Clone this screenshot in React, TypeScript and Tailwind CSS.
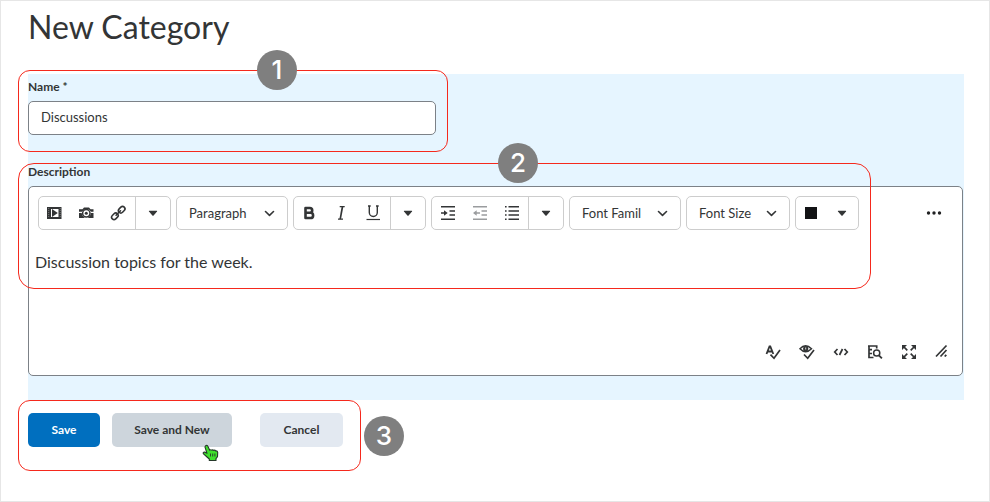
import type { ReactNode } from "react";

function Icon({ children, className = "" }: { children: ReactNode; className?: string }) {
  return (
    <svg width="18" height="18" viewBox="0 0 18 18" fill="none" stroke="currentColor" className={className} aria-hidden="true">
      {children}
    </svg>
  );
}

function Tool({ label, children, className = "" }: { label: string; children: ReactNode; className?: string }) {
  return (
    <button type="button" aria-label={label} className={`flex h-8 w-8 items-center justify-center ${className}`}>
      {children}
    </button>
  );
}

function MoreArrow({ label }: { label: string }) {
  return (
    <button type="button" aria-label={label} className="flex h-8 flex-1 items-center justify-center border-l border-[#cdcdcd]">
      <Caret />
    </button>
  );
}

function Caret() {
  return (
    <svg width="10" height="6" viewBox="0 0 10 6" fill="currentColor" aria-hidden="true">
      <path d="M1.3.7h7.4q.8.1.3.9L5.6 5.4q-.6.5-1.200 0L1 1.6Q.5.8 1.3.7Z" />
    </svg>
  );
}

const groupStyle = "flex h-[34px] shrink-0 items-center rounded-[5px] border border-[#cdcdcd] bg-white";

function ToolSelect({ label, value, className }: { label: string; value: string; className: string }) {
  return (
    <div className={`relative ${groupStyle} ${className}`}>
      <select aria-label={label} defaultValue={value} className="h-full w-full appearance-none bg-transparent pt-0.5 pl-3 text-[13px] outline-none">
        <option>{value}</option>
      </select>
      <svg className="pointer-events-none absolute inset-y-0 right-3 my-auto" width="12" height="10" viewBox="0 0 12 10" fill="none" stroke="currentColor" strokeWidth="1.6" strokeLinecap="round" strokeLinejoin="round" aria-hidden="true">
        <path d="M2.500 3.500 6.500 7.300l4-3.800" />
      </svg>
    </div>
  );
}

function Outline({ className }: { className: string }) {
  return <div className={`pointer-events-none absolute border border-[#f5291d] ${className}`} />;
}

function Badge({ n, className }: { n: number; className: string }) {
  return (
    <span className={`pointer-events-none absolute z-10 flex h-10 w-10 items-center justify-center rounded-full bg-[#7f7f7f] font-['Inter',sans-serif] text-[26px] leading-none font-medium text-white ${className}`}>
      {n}
    </span>
  );
}

function Toolbar() {
  return (
    <div className="flex items-center gap-[5px] pr-3 pl-[9px]">
      <div className={`${groupStyle} w-[133px]`}>
        <Tool label="Insert stuff">
          <Icon>
            <path fill="currentColor" stroke="none" fillRule="evenodd" d="M1 3h14.500v12H1ZM5 5v8h7.500V5Z" />
            <path fill="currentColor" stroke="none" d="M6 5 11.800 9 6 13Z" />
            <path stroke="#fff" strokeOpacity=".45" strokeWidth=".8" strokeDasharray="1 1" d="M2.700 4v10M14.200 4v10" />
          </Icon>
        </Tool>
        <Tool label="Insert image">
          <Icon>
            <path fill="currentColor" stroke="none" d="M1 5.200h3.500L6 3.500h5l1.500 1.700H15.500v2.600H13A5 5 0 0 0 4 7.800H1ZM1 8.900h2.700a5 5 0 0 0 2 4.200l1 .9H1ZM15.500 8.900h-2.700a5 5 0 0 1-2 4.200l-1 .9h5.700Z" />
            <circle cx="8.300" cy="9.300" r="3.700" strokeWidth="1.500" fill="#fff" />
            <circle cx="8.300" cy="9.300" r="1.500" fill="currentColor" stroke="none" />
          </Icon>
        </Tool>
        <Tool label="Insert quicklink">
          <Icon>
            <g strokeWidth="1.600" strokeLinecap="round" transform="translate(-.7)">
              <rect x="8.800" y="3.300" width="7.200" height="4.800" rx="2.400" transform="rotate(-45 12.400 5.700)" />
              <rect x="2" y="9.900" width="7.200" height="4.800" rx="2.400" transform="rotate(-45 5.600 12.300)" />
              <path d="m6.800 11.200 4.400-4.400" />
            </g>
          </Icon>
        </Tool>
        <MoreArrow label="More insert options" />
      </div>

      <ToolSelect label="Format" value="Paragraph" className="w-28" />

      <div className={`${groupStyle} w-[133px]`}>
        <Tool label="Bold">
          <Icon>
            <path strokeWidth="2.600" strokeLinejoin="round" d="M4.500 4h4.300a2.400 2.400 0 0 1 0 4.800H4.500ZM4.500 8.800h5a2.600 2.600 0 0 1 0 5.200h-5Z" />
          </Icon>
        </Tool>
        <Tool label="Italic">
          <Icon>
            <path strokeWidth="1.200" d="M6.700 2.600h5M5 15.200h5" />
            <path strokeWidth="1.700" d="M9.500 2.600 7.200 15.200" />
          </Icon>
        </Tool>
        <Tool label="Underline">
          <Icon>
            <path strokeWidth="1.400" d="M4.300 2v6.500a4 4 0 0 0 8 0V2M3 2h2.700M11 2h2.700" />
            <path strokeWidth="1.200" d="M1.500 15.500h13.500" />
          </Icon>
        </Tool>
        <MoreArrow label="More text styles" />
      </div>

      <div className={`${groupStyle} w-[133px]`}>
        <Tool label="Indent">
          <Icon>
            <path strokeWidth="1.500" d="M2 2.700h14M10.500 7h5.500M10.500 11h5.500M2 15.300h14M2 9h4" />
            <path fill="currentColor" stroke="none" d="M5 6.200 8.700 9 5 11.800Z" />
          </Icon>
        </Tool>
        <Tool label="Outdent" className="text-[#9a9c9e]">
          <Icon>
            <path strokeWidth="1.500" d="M2 2.700h14M10.500 7h5.500M10.500 11h5.500M2 15.300h14M5 9h4" />
            <path fill="currentColor" stroke="none" d="M5.700 6.200 2 9l3.700 2.800Z" />
          </Icon>
        </Tool>
        <Tool label="Bulleted list">
          <Icon>
            <path strokeWidth="1.500" d="M5.500 2.700H16M5.500 6.900H16M5.500 11.100H16M5.500 15.300H16M2 2.700h1.600M2 6.900h1.600M2 11.100h1.600M2 15.300h1.600" />
          </Icon>
        </Tool>
        <MoreArrow label="More list options" />
      </div>

      <ToolSelect label="Font family" value="Font Famil" className="w-28" />
      <ToolSelect label="Font size" value="Font Size" className="w-[104px]" />

      <button type="button" aria-label="Text color" className={`${groupStyle} w-16 justify-between pr-[11px] pl-[9px]`}>
        <span className="h-3 w-3 bg-[#121315]" />
        <Caret />
      </button>

      <button type="button" aria-label="More actions" className="ml-auto flex h-8 w-8 items-center justify-center">
        <svg width="16" height="4" viewBox="0 0 16 4" fill="#202122" aria-hidden="true">
          <circle cx="2.500" cy="2" r="1.700" />
          <circle cx="8" cy="2" r="1.700" />
          <circle cx="13.500" cy="2" r="1.700" />
        </svg>
      </button>
    </div>
  );
}

function StatusBar() {
  const cell = "w-[34px]";
  return (
    <div className="flex justify-end pr-1">
      <Tool label="Check spelling" className={cell}>
        <Icon>
          <path strokeWidth="1.800" d="M2.500 11 5.500 3.300h.8L9.300 11M3.500 8.500h5" />
          <path strokeWidth="1.700" d="m6.500 11.700 3.500 3.600L16 7" />
        </Icon>
      </Tool>
      <Tool label="Check accessibility" className={cell}>
        <Icon>
          <path strokeWidth="1.500" d="M2 5.800q5.500-6 11.500 0-6 6-11.500 0Z" />
          <circle cx="7.700" cy="5.700" r="2.600" fill="currentColor" stroke="none" />
          <path stroke="#fff" strokeWidth=".8" d="M7.700 4.500v2" />
          <path strokeWidth="1.700" d="m6 11.500 3.700 3.800L16 7" />
        </Icon>
      </Tool>
      <Tool label="Source code" className={cell}>
        <Icon>
          <path strokeWidth="1.700" d="M5.500 6 2.700 9l2.800 3M12.500 6l2.800 3-2.800 3M10.500 6l-3 6" />
        </Icon>
      </Tool>
      <Tool label="Preview" className={cell}>
        <Icon>
          <path strokeWidth="1.700" d="M7.500 14.500H3v-12M2 3h8.700v2.500M3 6.700h3M3 10.500h3" />
          <circle cx="10.700" cy="10" r="3.100" strokeWidth="1.500" />
          <path strokeWidth="1.800" d="m12.900 12.300 3 3" />
        </Icon>
      </Tool>
      <Tool label="Full screen" className={cell}>
        <Icon>
          <path strokeWidth="1.700" d="m3 3 4.300 4.300M15 3l-4.300 4.300M3 15l4.300-4.300M15 15l-4.300-4.300" />
          <path fill="currentColor" stroke="none" d="M2 2h5L2 7ZM16 2v5l-5-5ZM2 16v-5l5 5ZM16 16h-5l5-5Z" />
        </Icon>
      </Tool>
      <Tool label="Resize editor">
        <Icon>
          <path strokeWidth="1.700" d="M3 13.500 13.500 2.500M7.500 13.500l6-6.500" />
          <path strokeWidth="1.800" d="m11.700 13.500 1.600-1.700" />
        </Icon>
      </Tool>
    </div>
  );
}

function HandCursor() {
  return (
    <svg className="pointer-events-none absolute -bottom-[15px] left-[90px]" width="18" height="18" viewBox="0 0 18 18" aria-hidden="true">
      <path fill="#3fe02c" stroke="#26382a" strokeWidth="1.100" strokeLinejoin="round" d="M4 1.500Q5.500 1 6 2.500L7.700 6.200q1-.9 2 0 1-.8 2 .2 1.200-.6 2 .5 1.800-.2 2 1.500l-.2 4.200-1.500 2v1.900H7.300V15L5 13 1.300 9.700Q.9 8 2.600 8l2.400 1.300L3 3.200Q2.900 2 4 1.500Z" />
      <path fill="none" stroke="#26382a" strokeWidth=".9" d="M8.500 9.500v3M10.700 9.500v3M12.900 9.500v3" />
    </svg>
  );
}

const buttonStyle = "h-[34px] rounded-[5px] text-xs font-bold";

export default function App() {
  return (
    <main className="min-h-screen border border-[#e6e6e6] bg-white pr-[25px] pb-[54px] pl-[27px] font-['Lato',sans-serif] text-[#333536]">
      <h1 className="pt-1 text-[32px] leading-[44px]">New Category</h1>

      <form>
        <div className="mt-[25px] bg-[#e6f5ff] pb-6">
          <section className="relative pt-1">
            <label htmlFor="name" className="block text-xs leading-[18px] font-bold">
              Name *
            </label>
            <input
              id="name"
              defaultValue="Discussions"
              className="mt-[5px] block h-[34px] w-[408px] rounded-[5px] border border-[#7c8187] bg-white px-3 pb-0.5 text-[13px] outline-none"
            />
            <Outline className="-top-1 -bottom-[17px] -left-[10px] w-[430px] rounded-xl" />
            <Badge n={1} className="-top-6 left-[229px]" />
          </section>

          <section className="relative mt-7">
            <label htmlFor="description" className="block text-xs leading-[18px] font-bold">
              Description
            </label>
            <div className="mt-[5px] mr-px rounded-[5px] border border-[#7c8187] bg-white pt-[9px] pb-[7px]">
              <Toolbar />
              <textarea
                id="description"
                defaultValue="Discussion topics for the week."
                className="block h-[106px] w-full resize-none px-1.5 pt-5 text-base leading-6 outline-none"
              />
              <StatusBar />
            </div>
            <Outline className="top-0 -left-[10px] h-[126px] w-[853px] rounded-2xl" />
            <Badge n={2} className="-top-5 left-[470px]" />
          </section>
        </div>

        <footer className="relative flex pt-[13px]">
          <button type="submit" className={`${buttonStyle} w-[72px] bg-[#006fbf] text-white`}>
            Save
          </button>
          <div className="relative ml-3">
            <button type="button" className={`${buttonStyle} w-[120px] bg-[#cdd5dc]`}>
              Save and New
            </button>
            <HandCursor />
          </div>
          <button type="button" className={`${buttonStyle} ml-7 w-[83px] bg-[#e3e9f1]`}>
            Cancel
          </button>
          <Outline className="top-0 -bottom-6 -left-[10px] w-[343px] rounded-xl" />
          <Badge n={3} className="top-4 left-[336px]" />
        </footer>
      </form>
    </main>
  );
}
